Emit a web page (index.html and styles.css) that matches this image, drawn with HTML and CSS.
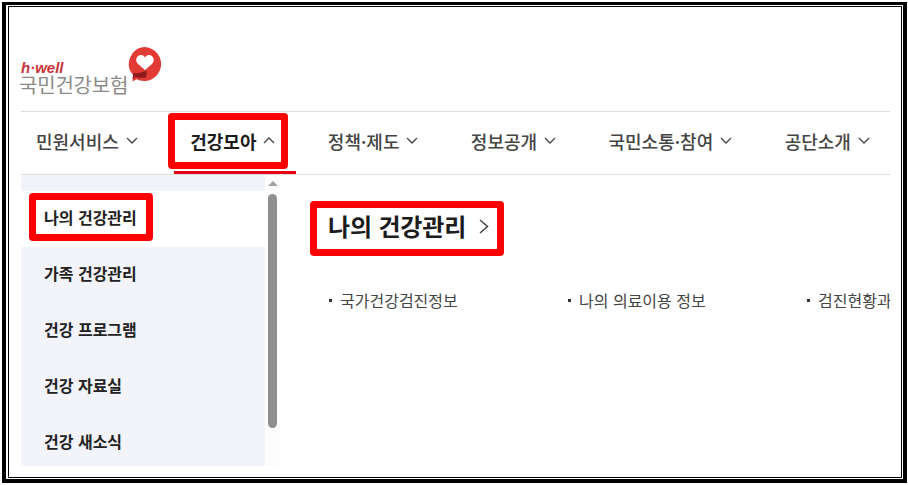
FILE: index.html
```html
<!DOCTYPE html>
<html lang="ko">
<head>
    <meta charset="UTF-8">
    <title>국민건강보험</title>
    <link rel="stylesheet" href="styles.css">
</head>
<body>
    <div class="frame">
        <div class="page">
            <div class="logo">
                <div class="logo-text">
                    <span class="logo-hwell">h·well</span>
                    <span class="logo-name">국민건강보험</span>
                </div>
                <svg class="logo-mark" width="34" height="36" viewBox="0 0 34 36">
                    <path d="M17 0a17 17 0 1 1-7.500 32.200l-4 2.300 .5-6.500A17 17 0 0 1 17 0z" fill="#e23b36"/>
                    <path d="M18 23l-7-6c-3.500-3.500-1.500-9 3-9 2 0 3.200 1 4 2.500 .8-1.500 2-2.500 4-2.500 4.500 0 6.500 5.500 3 9z" fill="#fff"/>
                    <path d="M6.500 26c4 .6 9-.5 13.500-2.500-.5 3-.5 5-1 7-3 .5-8 .5-10.500-.5l-3 2z" fill="#8e1a1c"/>
                </svg>
            </div>

            <nav class="gnb">
                <a class="gnb-item"><span>민원서비스</span><svg class="chev" width="12" height="7" viewBox="0 0 12 7"><path d="M1 1l5 5 5-5"/></svg></a>
                <a class="gnb-item gnb-open"><span>건강모아</span><svg class="chev" width="12" height="7" viewBox="0 0 12 7"><path d="M1 6l5-5 5 5"/></svg></a>
                <a class="gnb-item"><span>정책·제도</span><svg class="chev" width="12" height="7" viewBox="0 0 12 7"><path d="M1 1l5 5 5-5"/></svg></a>
                <a class="gnb-item"><span>정보공개</span><svg class="chev" width="12" height="7" viewBox="0 0 12 7"><path d="M1 1l5 5 5-5"/></svg></a>
                <a class="gnb-item"><span>국민소통·참여</span><svg class="chev" width="12" height="7" viewBox="0 0 12 7"><path d="M1 1l5 5 5-5"/></svg></a>
                <a class="gnb-item"><span>공단소개</span><svg class="chev" width="12" height="7" viewBox="0 0 12 7"><path d="M1 1l5 5 5-5"/></svg></a>
            </nav>

            <div class="menu">
                <div class="side">
                    <ul class="side-list">
                        <li class="side-item side-active">나의 건강관리</li>
                        <li class="side-item">가족 건강관리</li>
                        <li class="side-item">건강 프로그램</li>
                        <li class="side-item">건강 자료실</li>
                        <li class="side-item">건강 새소식</li>
                    </ul>
                    <div class="scroll">
                        <div class="scroll-up"></div>
                        <div class="scroll-thumb"></div>
                    </div>
                </div>
                <div class="detail">
                    <h2 class="detail-title">나의 건강관리<svg class="arrow" width="10" height="15" viewBox="0 0 10 15"><path d="M1 1l7.500 6.500-7.500 6.500"/></svg></h2>
                    <ul class="links">
                        <li>국가건강검진정보</li>
                        <li>나의 의료이용 정보</li>
                        <li>검진현황과</li>
                    </ul>
                </div>
            </div>

            <!-- 빨간 강조 박스 -->
            <div class="mark mark-gnb"></div>
            <div class="mark mark-side"></div>
            <div class="mark mark-title"></div>
        </div>
    </div>
</body>
</html>
```

FILE: styles.css
```css
* {
    box-sizing: border-box;
}

body {
    margin: 0;
    width: 908px;
    height: 485px;
    padding: 2px 0 0 2px;
    background-color: #fff;
    font-family: "Noto Sans CJK KR", "Noto Sans", sans-serif;
    overflow: hidden;
}

.frame {
    width: 905px;
    height: 481px;
    border: solid #000;
    border-width: 3px 4px 4px 4px;
    padding: 1px 1px 1px 2px;
    background-color: #fff;
}

.page {
    position: relative;
    width: 100%;
    height: 100%;
    border: 1px solid #000;
    padding-left: 12px;
    overflow: hidden;
}

.logo {
    display: flex;
    align-items: flex-start;
    height: 104px;
    padding-top: 40px;
}

.logo-text {
    display: flex;
    flex-direction: column;
    margin-left: -2px;
    padding-top: 14px;
}

.logo-hwell {
    font-family: "Liberation Sans", sans-serif;
    font-size: 15px;
    font-weight: bold;
    font-style: italic;
    line-height: 14px;
    color: #c8333a;
    margin-left: 2px;
}

.logo-name {
    font-size: 20px;
    line-height: 20px;
    letter-spacing: -0.2px;
    color: #8a8a88;
    white-space: nowrap;
}

.logo-mark {
    margin-left: -1px;
}

.gnb {
    display: flex;
    gap: 52.4px;
    height: 64px;
    width: 869px;
    padding-left: 15px;
    border-top: 1px solid #ddd;
    border-bottom: 1px solid #ddd;
}

.gnb-item {
    display: flex;
    align-items: center;
    gap: 7px;
    position: relative;
    padding-bottom: 5px;
    font-size: 18px;
    font-weight: 500;
    color: #444;
    white-space: nowrap;
}

.gnb-open {
    color: #1c1c1c;
    font-weight: 700;
}

.chev {
    fill: none;
    stroke: #444;
    stroke-width: 1.300;
}

.gnb-open::after {
    content: "";
    position: absolute;
    left: -16.500px;
    bottom: 0;
    width: 122px;
    height: 3px;
    background-color: #e60012;
}

.menu {
    display: flex;
    width: 869px;
    height: 291px;
}

.side {
    display: flex;
    flex: none;
    width: 260px;
}

.side-list {
    list-style: none;
    width: 244px;
    margin: 0;
    padding: 16px 0 0;
    background-color: #f3f4f9;
}

.side-item {
    display: flex;
    align-items: center;
    height: 56px;
    padding: 0 0 4px 23px;
    font-size: 16px;
    font-weight: 700;
    color: #222;
}

.side-active {
    background-color: #fff;
}

.scroll {
    position: relative;
    width: 16px;
    background-color: #fdfdfd;
}

.scroll-up {
    position: absolute;
    left: 3px;
    top: 6px;
    border-left: 5px solid transparent;
    border-right: 5px solid transparent;
    border-bottom: 5px solid #a3a3a3;
}

.scroll-thumb {
    position: absolute;
    left: 3px;
    top: 19px;
    width: 9px;
    height: 234px;
    border-radius: 5px;
    background-color: #8f8f8f;
}

.detail {
    flex: 1;
    min-width: 0;
    padding: 35px 0 0 47px;
    overflow: hidden;
}

.detail-title {
    display: flex;
    align-items: center;
    gap: 13px;
    margin: 0;
    font-size: 24px;
    font-weight: 700;
    line-height: 32px;
    letter-spacing: -0.15px;
    color: #1c1c1c;
}

.arrow {
    fill: none;
    stroke: #444;
    stroke-width: 1.500;
}

.links {
    display: flex;
    list-style: none;
    margin: 0;
    padding: 47px 0 0;
    font-size: 16px;
    line-height: 22px;
    color: #444;
    white-space: nowrap;
}

.links li {
    position: relative;
    width: 239px;
    padding-left: 12px;
    flex: none;
}

.links li::before {
    content: "";
    position: absolute;
    left: 1px;
    top: 10px;
    width: 3px;
    height: 3px;
    background-color: #333;
}

.mark {
    position: absolute;
    border: 7px solid #f00;
    border-radius: 4px;
}

.mark-gnb {
    left: 159px;
    top: 106px;
    width: 120px;
    height: 56px;
}

.mark-side {
    left: 20px;
    top: 186px;
    width: 124px;
    height: 48px;
}

.mark-title {
    left: 301px;
    top: 194px;
    width: 194px;
    height: 55px;
}
```
